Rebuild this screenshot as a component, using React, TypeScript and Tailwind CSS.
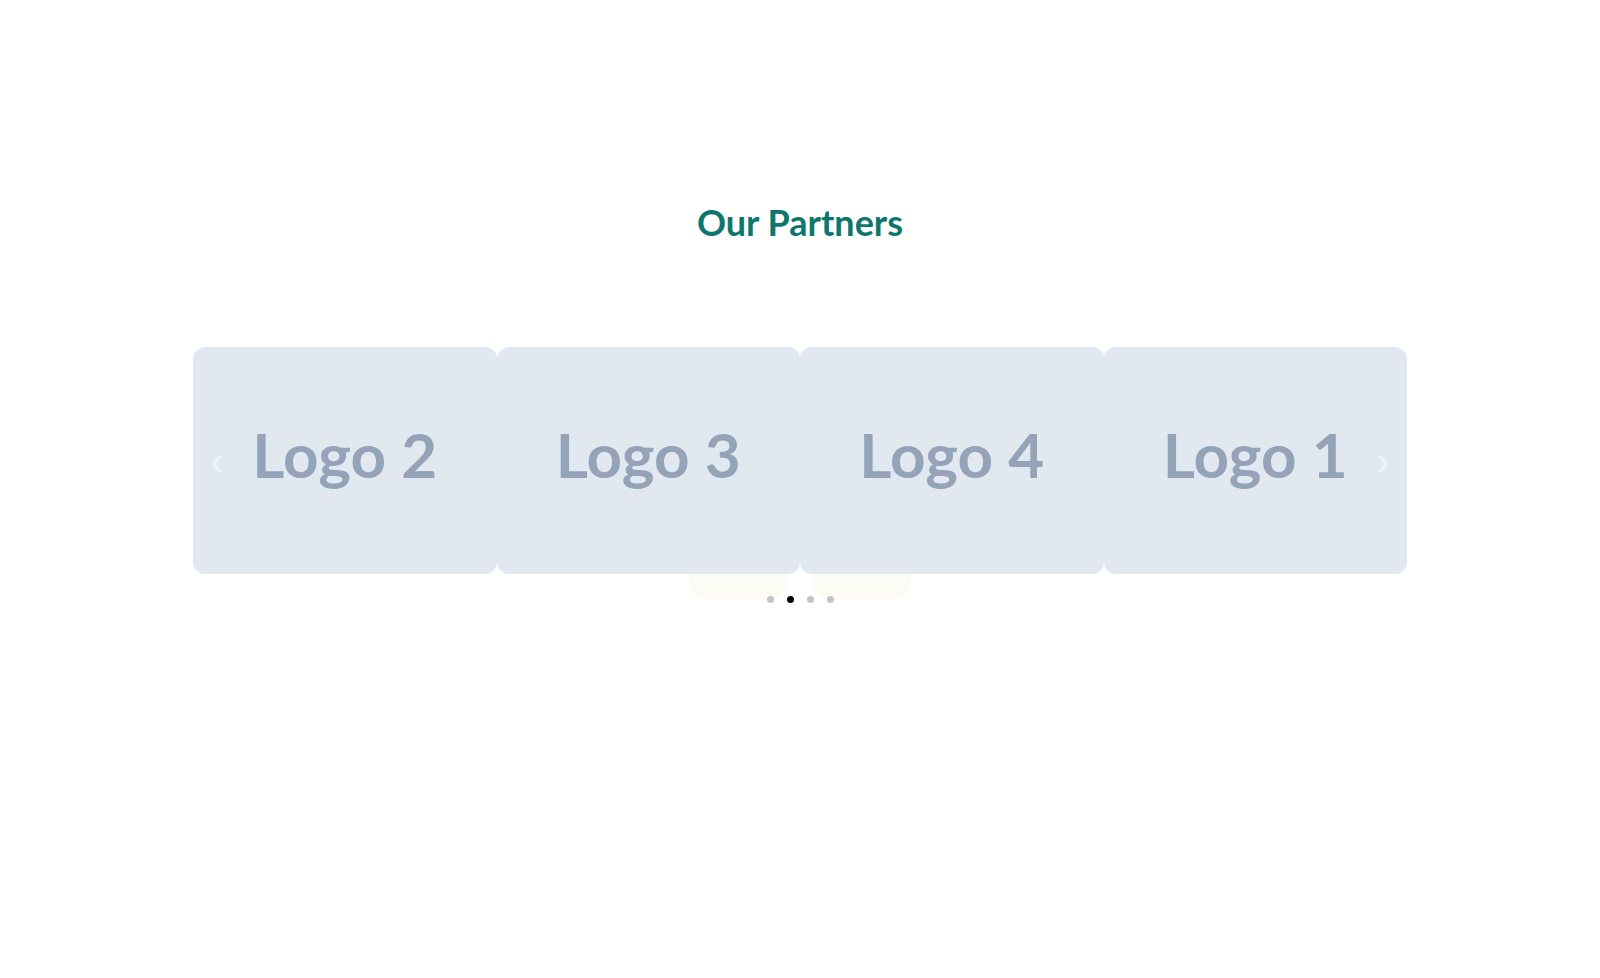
import React, { useState } from 'react';

const logos = ['Logo 2', 'Logo 3', 'Logo 4', 'Logo 1'];

const Chevron: React.FC<{ dir: 'left' | 'right' }> = ({ dir }) => (
  <svg width="14" height="22" viewBox="0 0 14 22" fill="none">
    <path
      d={dir === 'left' ? 'M10 4 L3.5 11 L10 18' : 'M4 4 L10.5 11 L4 18'}
      stroke="currentColor"
      strokeWidth="3"
      strokeLinecap="round"
      strokeLinejoin="round"
    />
  </svg>
);

const App: React.FC = () => {
  const [active, setActive] = useState(1);

  return (
    <div className="min-h-screen bg-white" style={{ fontFamily: 'Lato, "Open Sans", sans-serif' }}>
      <section className="pt-[202px]">
        <h2 className="text-center text-4xl font-bold text-[#0f766e]">Our Partners</h2>

        <div className="relative mx-auto mt-[105px] w-[1214px]">
          {/* back slides peeking out under the track */}
          <div className="absolute inset-x-0 top-[120px] flex justify-center gap-6">
            <div className="h-[133px] w-[99px] rounded-[20px] bg-[#fcfbf4]" />
            <div className="h-[133px] w-[99px] rounded-[20px] bg-[#fcfbf4]" />
          </div>

          <div className="relative flex">
            {logos.map(name => (
              <div
                key={name}
                className="flex h-[227px] flex-1 items-center justify-center rounded-xl bg-[#e2e8f0] pb-[14px]"
              >
                <span className="text-[62px] leading-none font-bold text-[#94a3b8]">{name}</span>
              </div>
            ))}
          </div>

          <div className="pointer-events-none absolute inset-x-0 top-0 flex h-[227px] items-center justify-between px-[17px] pt-[6px] text-white/50">
            <button className="pointer-events-auto">
              <Chevron dir="left" />
            </button>
            <button className="pointer-events-auto">
              <Chevron dir="right" />
            </button>
          </div>

          <div className="relative mt-[22px] flex justify-center gap-[13px]">
            {[0, 1, 2, 3].map(i => (
              <button
                key={i}
                onClick={() => setActive(i)}
                className={
                  'h-[7px] w-[7px] rounded-full ' + (i === active ? 'bg-black' : 'bg-[#c4c4c4]')
                }
              />
            ))}
          </div>
        </div>
      </section>
    </div>
  );
};

export default App;
